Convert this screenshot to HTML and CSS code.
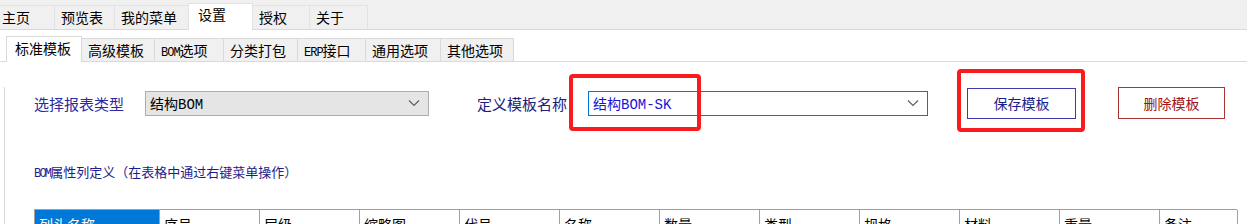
FILE: index.html
```html
<!DOCTYPE html>
<html>
<head>
<meta charset="utf-8">
<link rel="stylesheet" href="styles.css">
</head>
<body>
<div class="app">
  <div class="topbar">
    <div class="ttab">主页</div>
    <div class="ttab">预览表</div>
    <div class="ttab">我的菜单</div>
    <div class="ttab active">设置</div>
    <div class="ttab">授权</div>
    <div class="ttab">关于</div>
  </div>
  <div class="subbar">
    <div class="stab active">标准模板</div>
    <div class="stab">高级模板</div>
    <div class="stab"><span class="mono">BOM</span>选项</div>
    <div class="stab">分类打包</div>
    <div class="stab"><span class="mono">ERP</span>接口</div>
    <div class="stab">通用选项</div>
    <div class="stab">其他选项</div>
  </div>
  <div class="panel">
    <div class="formrow">
      <div class="label l1">选择报表类型</div>
      <div class="combo c1"><span class="ctext">结构BOM</span><svg class="chev" width="12" height="8" viewBox="0 0 12 8"><path d="M1 1.5 L6 6.5 L11 1.5" fill="none" stroke="#606060" stroke-width="1.2"/></svg></div>
      <div class="label l2">定义模板名称</div>
      <div class="combo c2"><span class="ctext blue">结构BOM-SK</span><svg class="chev" width="12" height="8" viewBox="0 0 12 8"><path d="M1 1.5 L6 6.5 L11 1.5" fill="none" stroke="#606060" stroke-width="1.2"/></svg></div>
      <div class="btn save">保存模板</div>
      <div class="btn del">删除模板</div>
    </div>
    <div class="section"><span class="mono small">BOM</span>属性列定义（在表格中通过右键菜单操作）</div>
    <div class="grid">
      <div class="cell sel">列头名称</div>
      <div class="cell">序号</div>
      <div class="cell">层级</div>
      <div class="cell">缩略图</div>
      <div class="cell">代号</div>
      <div class="cell">名称</div>
      <div class="cell">数量</div>
      <div class="cell">类型</div>
      <div class="cell">规格</div>
      <div class="cell">材料</div>
      <div class="cell">重量</div>
      <div class="cell">备注</div>
    </div>
  </div>
  <div class="mark m1"></div>
  <div class="mark m2"></div>
</div>
</body>
</html>
```
FILE: styles.css
```css
* { box-sizing: border-box; }
html, body { margin: 0; padding: 0; }
body {
  width: 1247px;
  height: 224px;
  overflow: hidden;
  background: #ffffff;
  font-family: "Noto Sans CJK SC", "Microsoft YaHei", sans-serif;
  font-size: 14px;
  color: #000;
}
.app { position: relative; width: 1247px; height: 224px; overflow: hidden; }

.topbar {
  height: 30px;
  background: #f0f0f0;
  border-bottom: 1px solid #d9d9d9;
  display: grid;
  grid-template-columns: 55px 60px 74px 64px 57px 58px;
  align-items: end;
}
.ttab {
  height: 24px;
  border: 1px solid #e2e2e2;
  border-bottom: none;
  margin-left: -1px;
  background: #f0f0f0;
  padding-left: 6px;
  line-height: 23px;
  white-space: nowrap;
}
.ttab:first-child { margin-left: 0; padding-left: 2px; border-left: none; }
.ttab.active {
  height: 27px;
  margin-bottom: -1px;
  background: #ffffff;
  padding-left: 9px;
  line-height: 21px;
  position: relative;
  z-index: 1;
}

.subbar {
  height: 32px;
  border-bottom: 1px solid #dadada;
  display: flex;
  align-items: flex-end;
  padding-left: 6px;
}
.stab {
  height: 23px;
  border: 1px solid #d9d9d9;
  border-bottom: none;
  margin-left: -1px;
  background: #f0f0f0;
  line-height: 23px;
  padding-left: 6px;
  white-space: nowrap;
}
.stab:nth-child(2) { width: 74px; }
.stab:nth-child(3) { width: 70px; }
.stab:nth-child(4) { width: 75px; }
.stab:nth-child(5) { width: 69px; }
.stab:nth-child(6) { width: 76px; }
.stab:nth-child(7) { width: 74px; }
.stab.active {
  width: 76px;
  margin-left: 0;
  height: 26px;
  margin-bottom: -1px;
  background: #ffffff;
  padding-left: 8px;
  line-height: 22px;
  position: relative;
  z-index: 1;
}
.mono {
  font-family: "Liberation Mono", monospace;
  font-size: 12px;
  letter-spacing: -1px;
}
.mono.small { font-size: 12px; letter-spacing: -1.8px; }

.panel {
  border-left: 1px solid #dadada;
  margin-left: 4px;
  height: 162px;
  padding-left: 29px;
}
.formrow {
  display: flex;
  align-items: center;
  height: 32px;
  margin-top: 25px;
}
.label { font-size: 15px; white-space: nowrap; width: 90px; }
.l1 { color: #2a2aa2; }
.l2 { color: #20207a; margin-left: 48px; }
.combo {
  height: 25px;
  border: 1px solid #adadad;
  display: flex;
  align-items: center;
  justify-content: space-between;
  padding: 0 8px 0 4px;
  margin-left: 21px;
}
.c1 { width: 284px; background: #e5e5e5; }
.c2 { width: 340px; background: #ffffff; border-color: #0078d7; }
.ctext {
  font-family: "Liberation Mono", "Noto Sans CJK SC", monospace;
  font-size: 14px;
  white-space: nowrap;
}
.ctext.blue { color: #1414d8; }
.chev { display: block; }
.btn {
  height: 31px;
  background: #fff;
  display: flex;
  align-items: center;
  justify-content: center;
  font-size: 14px;
}
.save { width: 109px; margin-left: 39px; border: 1px solid #3a3aa8; color: #1c1c8a; }
.del { width: 107px; margin-left: 42px; height: 32px; border: 1px solid #aa3434; color: #a01414; }

.section {
  margin-top: 43px;
  font-size: 13px;
  color: #1c1c8c;
  height: 20px;
  line-height: 20px;
}
.grid {
  margin-top: 27px;
  width: 1203px;
  display: grid;
  grid-template-columns: 125px repeat(10, 100px) 78px;
  border-top: 1px solid #a0a0a0;
  border-left: 1px solid #a0a0a0;
}
.cell {
  height: 28px;
  border-right: 1px solid #a0a0a0;
  padding: 2px 4px;
  font-size: 14px;
  line-height: 24px;
  white-space: nowrap;
}
.cell.sel { background: #0078d7; color: #fff; }

.mark {
  position: absolute;
  border: 4px solid #f81c1c;
  border-radius: 4px;
}
.m1 { left: 569px; top: 74px; width: 132px; height: 57px; }
.m2 { left: 957px; top: 69px; width: 128px; height: 63px; }
```
